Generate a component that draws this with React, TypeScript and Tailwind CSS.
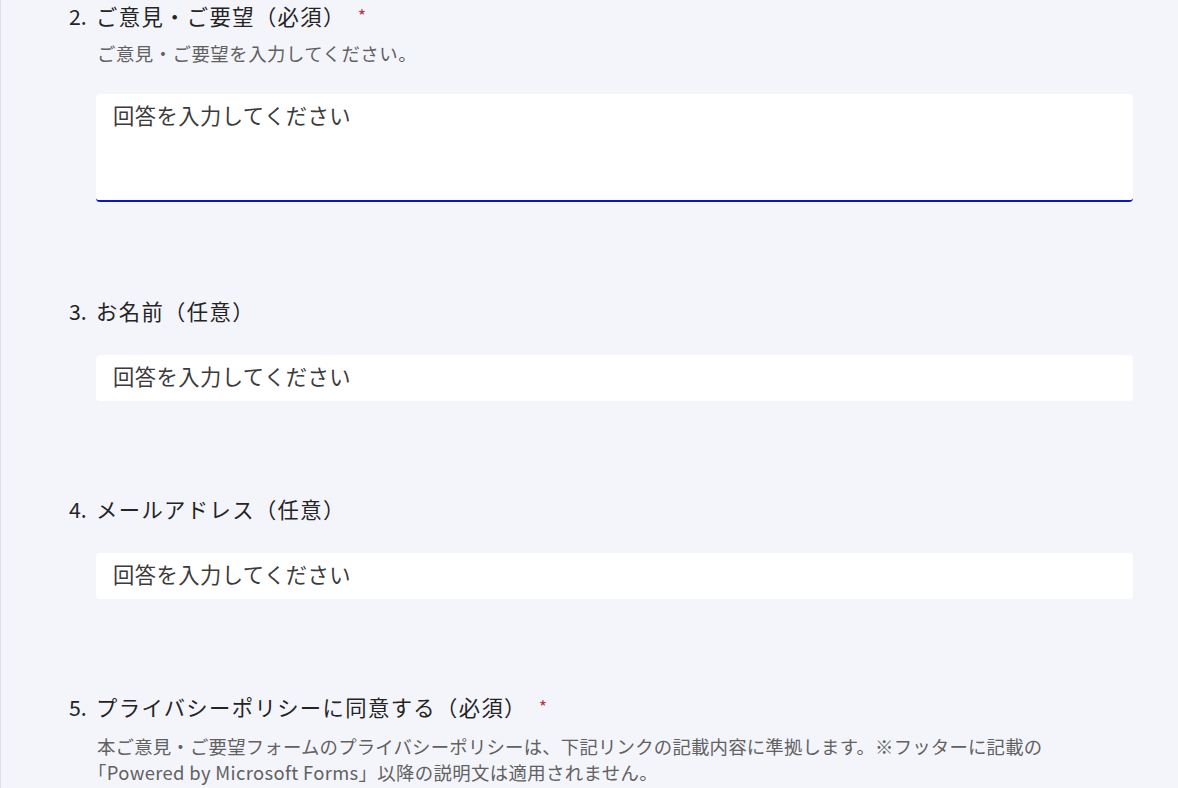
const font = "font-['Noto_Sans_CJK_JP','Noto_Sans',sans-serif]";

function Title({ num, text, required }: { num: string; text: string; required?: boolean }) {
  return (
    <div className="flex items-center h-[30px] pb-[4px] text-[21.3px] leading-[26px] text-[#242424]">
      <span className="w-[27px] shrink-0">{num}</span>
      <span className="tracking-[1.4px]">{text}</span>
      {required && <span className="ml-[12px] text-[18px] leading-[18px] -mt-[2px] text-[#c4314b]">*</span>}
    </div>
  );
}

const box =
  "ml-[27px] block w-[1037px] rounded-[4px] bg-white pl-[17px] text-[21.3px] leading-[30px] tracking-[0.45px] text-[#242424] placeholder:text-[#3b3b3b] outline-none";

export default function App() {
  return (
    <div className={`${font} min-h-[788px] w-full bg-[#f4f5fb] border-l border-[#dfe0ea] overflow-hidden`}>
      <div className="pl-[68px] pr-[45px] pt-[3px]">
        {/* Q2 */}
        <Title num="2." text="ご意見・ご要望（必須）" required />
        <p className="ml-[28px] mt-[7px] text-[18.4px] leading-[26px] tracking-[0.5px] text-[#616161]">
          ご意見・ご要望を入力してください。
        </p>
        <textarea
          className={`${box} mt-[28px] h-[108px] resize-none border-b-2 border-[#0b17c7] pt-[6px]`}
          placeholder="回答を入力してください"
        />

        {/* Q3 */}
        <div className="mt-[96px]">
          <Title num="3." text="お名前（任意）" />
        </div>
        <input className={`${box} mt-[27px] h-[46px] pb-[5px]`} placeholder="回答を入力してください" />

        {/* Q4 */}
        <div className="mt-[95px]">
          <Title num="4." text="メールアドレス（任意）" />
        </div>
        <input className={`${box} mt-[27px] h-[46px] pb-[5px]`} placeholder="回答を入力してください" />

        {/* Q5 */}
        <div className="mt-[95px]">
          <Title num="5." text="プライバシーポリシーに同意する（必須）" required />
        </div>
        <p className="ml-[28px] mt-[9px] text-[18.4px] leading-[26px] tracking-[0.2px] text-[#616161] w-[1000px]">
          本ご意見・ご要望フォームのプライバシーポリシーは、下記リンクの記載内容に準拠します。※フッターに記載の
          <br />
          <span className="-ml-[9px] tracking-[0.35px]">「Powered by Microsoft Forms」以降の説明文は適用されません。</span>
        </p>
      </div>
    </div>
  );
}
